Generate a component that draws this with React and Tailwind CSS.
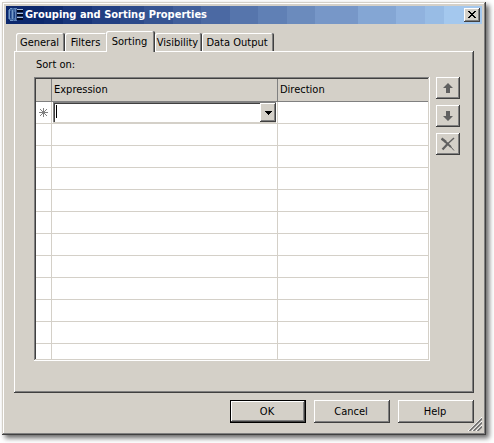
const raised =
  "bg-[#d4d0c8] shadow-[inset_-1px_-1px_#404040,inset_1px_1px_#ffffff,inset_-2px_-2px_#808080]";

const tabs = [
  { label: "General", size: "w-[49px]" },
  { label: "Filters", size: "w-[43px]" },
  { label: "Sorting", size: "w-[49px]" },
  { label: "Visibility", size: "w-[47px]" },
  { label: "Data Output", size: "w-[72px]" },
];

function GroupIcon() {
  return (
    <svg className="h-4 w-4 shrink-0" viewBox="0 0 16 16" shapeRendering="crispEdges" aria-hidden="true">
      <path d="M2 1h5v13H2l-2-2V3z" fill="#3f66a0" />
      <path d="M2 1h2v1H2zM1 2h1v10H1zM4 3h1v9H4zM2 13h3v1H2z" fill="#7598c8" />
      <path d="M2 4h1v7H2zM6 5h1v6H6z" fill="#1c3f84" />
      <path d="M6 1h3v1H8v11h1v1H6v-1h1V2H6z" fill="#5f83b8" />
      <path d="M8 2h7v11H8z" fill="#2b467c" />
      <path d="M9 2h6v1H9zM9 6h6v1H9zM9 10h6v1H9z" fill="#a8bcd8" />
      <path d="M9 3h6v2H9zM9 7h6v2H9zM9 11h6v2H9z" fill="#000820" />
    </svg>
  );
}

function ArrowIcon({ down }) {
  return (
    <svg className="h-[10px] w-[10px]" viewBox="0 0 10 10" aria-hidden="true">
      <path
        d={down ? "M3 0h4v5h3L5 10 0 5h3z" : "M5 0l5 5H7v5H3V5H0z"}
        fill="#606060"
      />
    </svg>
  );
}

function DeleteIcon() {
  return (
    <svg className="h-[14px] w-[14px]" viewBox="0 0 14 14" fill="none" stroke="#606060" aria-hidden="true">
      <path d="M0.500 1.500L5 5" strokeWidth="2.4" />
      <path d="M4 4.500L10 10" strokeWidth="1.8" />
      <path d="M9.500 9.500L13 13.500" strokeWidth="1" />
      <path d="M13 1L7 6.500" strokeWidth="1.4" />
      <path d="M7.500 6L1.500 12.500" strokeWidth="2.2" />
    </svg>
  );
}

function SideButton({ label, children }) {
  return (
    <button type="button" aria-label={label} className={`flex h-[22px] w-6 items-center justify-center ${raised}`}>
      {children}
    </button>
  );
}

function Tab({ label, size, active }) {
  return (
    <button
      type="button"
      role="tab"
      aria-selected={active}
      className={`${size} rounded-t-[2px] bg-[#d4d0c8] pr-0.5 leading-4 whitespace-nowrap shadow-[inset_-1px_0_#404040,inset_1px_1px_#ffffff,inset_-2px_0_#808080] ${
        active ? "relative z-10 -mb-px -ml-0.5 h-[21px]" : "h-[18px] pt-0.5"
      }`}
    >
      {label}
    </button>
  );
}

export default function App() {
  return (
    <div className="bg-white pt-0.5 pr-2 pb-2 pl-0.5 font-['DejaVu_Sans_Condensed','DejaVu_Sans',sans-serif] text-[11px] text-black">
      <div
        role="dialog"
        aria-labelledby="title"
        className="relative bg-[#d4d0c8] p-1 shadow-[inset_-1px_-1px_#404040,inset_1px_1px_#d4d0c8,inset_-2px_-2px_#808080,inset_2px_2px_#ffffff,3px_3px_5px_rgba(0,0,0,0.6)]"
      >
        <header className="flex h-[18px] items-center bg-[linear-gradient(to_right,#0c286d_8%,#102c70_8%_12%,#18357a_12%_18%,#223f82_18%_24%,#2c4a8a_24%_29%,#365492_29%_35%,#415f9b_35%_41%,#4b69a3_41%_47%,#5675ac_47%_53%,#6080b5_53%_59%,#6b8bbd_59%_65%,#7797c8_65%_74%,#84a6d4_74%_82%,#90b2de_82%_88%,#98bce5_88%_92%,#a4c8ee_92%)] pr-0.5 pl-0.5">
          <GroupIcon />
          <h1 id="title" className="ml-px flex-1 font-bold whitespace-nowrap text-white">
            Grouping and Sorting Properties
          </h1>
          <button type="button" aria-label="Close" className={`flex h-[14px] w-4 items-center justify-center ${raised}`}>
            <svg className="mb-px h-[7px] w-2" viewBox="0 0 8 7" shapeRendering="crispEdges" aria-hidden="true">
              <path
                d="M0 0h2v1H0zM6 0h2v1H6zM1 1h2v1H1zM5 1h2v1H5zM2 2h4v1H2zM3 3h2v1H3zM2 4h4v1H2zM1 5h2v1H1zM5 5h2v1H5zM0 6h2v1H0zM6 6h2v1H6z"
                fill="#000"
              />
            </svg>
          </button>
        </header>

        <main className="px-2 pt-[7px] pb-2">
          <div role="tablist" className="flex h-5 items-end pl-0.5">
            {tabs.map((t) => (
              <Tab key={t.label} label={t.label} size={t.size} active={t.label === "Sorting"} />
            ))}
          </div>

          <section
            role="tabpanel"
            className="pt-1.5 pr-3.5 pb-8 pl-5 shadow-[inset_-1px_-1px_#404040,inset_1px_1px_#ffffff,inset_-2px_-2px_#808080]"
          >
            <h2 id="sort-label" className="mb-1 pl-0.5 leading-4">
              Sort on:
            </h2>
            <div className="flex items-start gap-1.5">
              <div className="min-w-0 flex-1 bg-white p-0.5 shadow-[inset_-1px_-1px_#ffffff,inset_1px_1px_#808080,inset_-2px_-2px_#d4d0c8,inset_2px_2px_#404040]">
                <table aria-labelledby="sort-label" className="w-full table-fixed border-separate border-spacing-0">
                  <colgroup>
                    <col className="w-4" />
                    <col className="w-[226px]" />
                    <col />
                  </colgroup>
                  <thead>
                    <tr className="h-[23px] bg-[#d4d0c8] text-left">
                      <td className="border-r border-b border-[#808080] p-0" />
                      <th scope="col" className="border-r border-b border-[#808080] py-0 pr-0 pl-0.5 font-normal">
                        Expression
                      </th>
                      <th scope="col" className="border-b border-[#808080] py-0 pr-0 pl-0.5 font-normal">
                        Direction
                      </th>
                    </tr>
                  </thead>
                  <tbody>
                    <tr className="h-[22px]">
                      <td className="border-r border-b border-[#d4d0c8] p-0">
                        <svg className="mx-auto h-[9px] w-[9px]" viewBox="0 0 9 9" stroke="#808080" aria-hidden="true">
                          <path d="M4.500 0v9M0 4.500h9M1 1l7 7M8 1l-7 7" />
                        </svg>
                      </td>
                      <td className="border-r border-b border-[#d4d0c8] px-px py-0">
                        <div className="flex h-[21px] items-start pt-px pl-0.5 shadow-[inset_0_-1px_#d4d0c8,inset_1px_1px_#808080,inset_2px_2px_#404040]">
                          <span className="mt-0.5 ml-px h-[13px] w-px bg-black" />
                          <input aria-label="Expression" type="text" className="h-4 min-w-0 flex-1 outline-none" />
                          <button
                            type="button"
                            aria-label="Show expressions"
                            className={`flex h-[19px] w-4 items-center justify-center ${raised}`}
                          >
                            <svg className="h-1 w-[7px]" viewBox="0 0 7 4" shapeRendering="crispEdges" aria-hidden="true">
                              <path d="M0 0h7v1H0zM1 1h5v1H1zM2 2h3v1H2zM3 3h1v1H3z" fill="#000" />
                            </svg>
                          </button>
                        </div>
                      </td>
                      <td className="border-b border-[#d4d0c8] p-0" />
                    </tr>
                    {Array.from({ length: 10 }, (_, i) => (
                      <tr key={i} className="h-[22px]">
                        <td className="border-r border-b border-[#d4d0c8] p-0" />
                        <td className="border-r border-b border-[#d4d0c8] p-0" />
                        <td className="border-b border-[#d4d0c8] p-0" />
                      </tr>
                    ))}
                    <tr className="h-[15px]">
                      <td className="border-r border-[#d4d0c8] p-0" />
                      <td className="border-r border-[#d4d0c8] p-0" />
                      <td className="p-0" />
                    </tr>
                  </tbody>
                </table>
              </div>
              <div className="flex flex-col gap-1.5">
                <SideButton label="Move up">
                  <ArrowIcon />
                </SideButton>
                <SideButton label="Move down">
                  <ArrowIcon down />
                </SideButton>
                <SideButton label="Delete">
                  <DeleteIcon />
                </SideButton>
              </div>
            </div>
          </section>

          <footer className="mt-[7px] flex justify-end gap-2">
            <button
              type="button"
              className="h-[23px] w-19 pt-0.5 pr-0.5 shadow-[inset_0_0_0_1px_#000000,inset_-2px_-2px_#404040,inset_2px_2px_#ffffff,inset_-3px_-3px_#808080]"
            >
              OK
            </button>
            <button type="button" className={`h-[23px] w-19 pt-0.5 pr-0.5 ${raised}`}>
              Cancel
            </button>
            <button type="button" className={`h-[23px] w-19 pt-0.5 pr-0.5 ${raised}`}>
              Help
            </button>
          </footer>
        </main>

        <svg className="absolute right-1 bottom-1 h-[14px] w-[14px]" viewBox="0 0 14 14" fill="none" aria-hidden="true">
          <path d="M0 14L14 0M4 14L14 4M8 14L14 8" stroke="#fff" />
          <path d="M1.500 14L14 1.500M5.500 14L14 5.500M9.500 14L14 9.500" stroke="#707070" strokeWidth="1.600" />
        </svg>
      </div>
    </div>
  );
}
